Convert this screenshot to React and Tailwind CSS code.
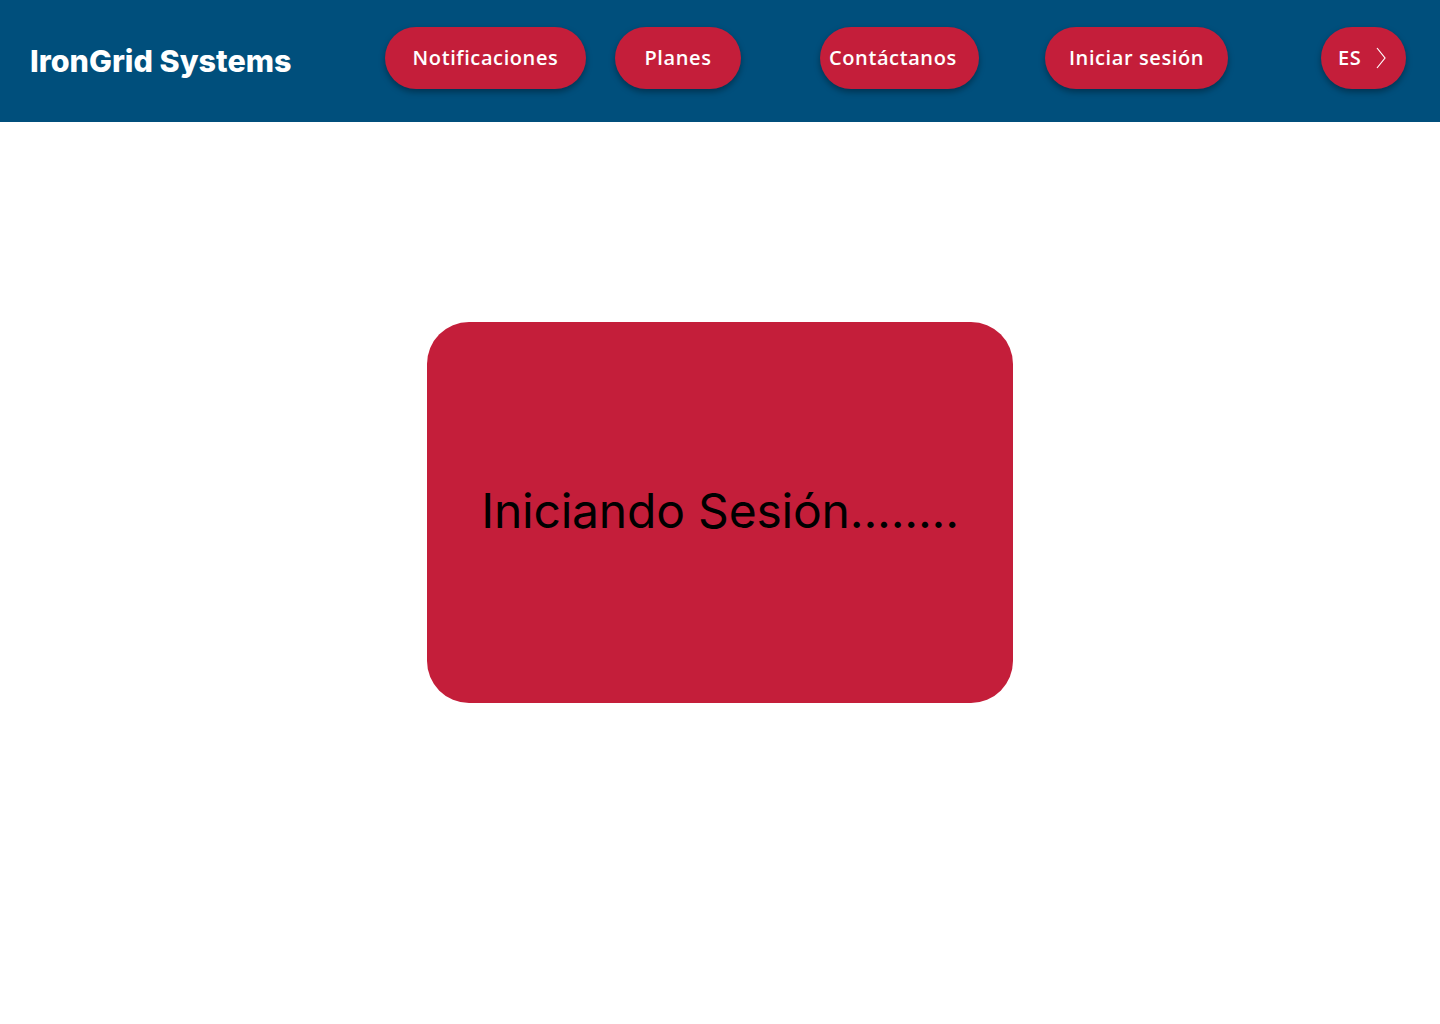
function NavButton({ children, className = '' }) {
  return (
    <button
      className={`h-[62px] rounded-full bg-[#c41e3a] text-white text-[20px] font-semibold tracking-[0.6px] shadow-[0_3px_6px_rgba(0,0,0,0.35)] flex items-center ${className}`}
      style={{ fontFamily: '"Open Sans", "Liberation Sans", sans-serif' }}
    >
      {children}
    </button>
  );
}

export default function App() {
  return (
    <div className="min-h-screen bg-white" style={{ fontFamily: 'Inter, "Liberation Sans", sans-serif' }}>
      <header className="h-[122px] bg-[#004f7c] flex items-center">
        <h1 className="ml-[30px] w-[355px] text-white text-[30.5px] font-extrabold">
          IronGrid Systems
        </h1>
        <nav className="flex items-center -mt-[6px]">
          <NavButton className="w-[201px] justify-center">Notificaciones</NavButton>
          <NavButton className="w-[126px] justify-center ml-[29px]">Planes</NavButton>
          <NavButton className="w-[159px] justify-start pl-[9px] ml-[79px]">Contáctanos</NavButton>
          <NavButton className="w-[183px] justify-center ml-[66px]">Iniciar sesión</NavButton>
          <NavButton className="w-[85px] justify-start pl-[17px] ml-[93px]">
            <span>ES</span>
            <svg className="ml-[14px]" width="12" height="24" viewBox="0 0 12 24" fill="none">
              <path d="M2 2 L10 12 L2 22" stroke="white" strokeWidth="1.2" />
            </svg>
          </NavButton>
        </nav>
      </header>

      <main className="flex justify-center pt-[200px]">
        <div className="w-[586px] h-[381px] rounded-[42px] bg-[#c41e3a] flex items-center justify-center">
          <p className="text-black text-[48px] font-normal tracking-[-0.2px] -mt-[4px]">Iniciando Sesión........</p>
        </div>
      </main>
    </div>
  );
}
